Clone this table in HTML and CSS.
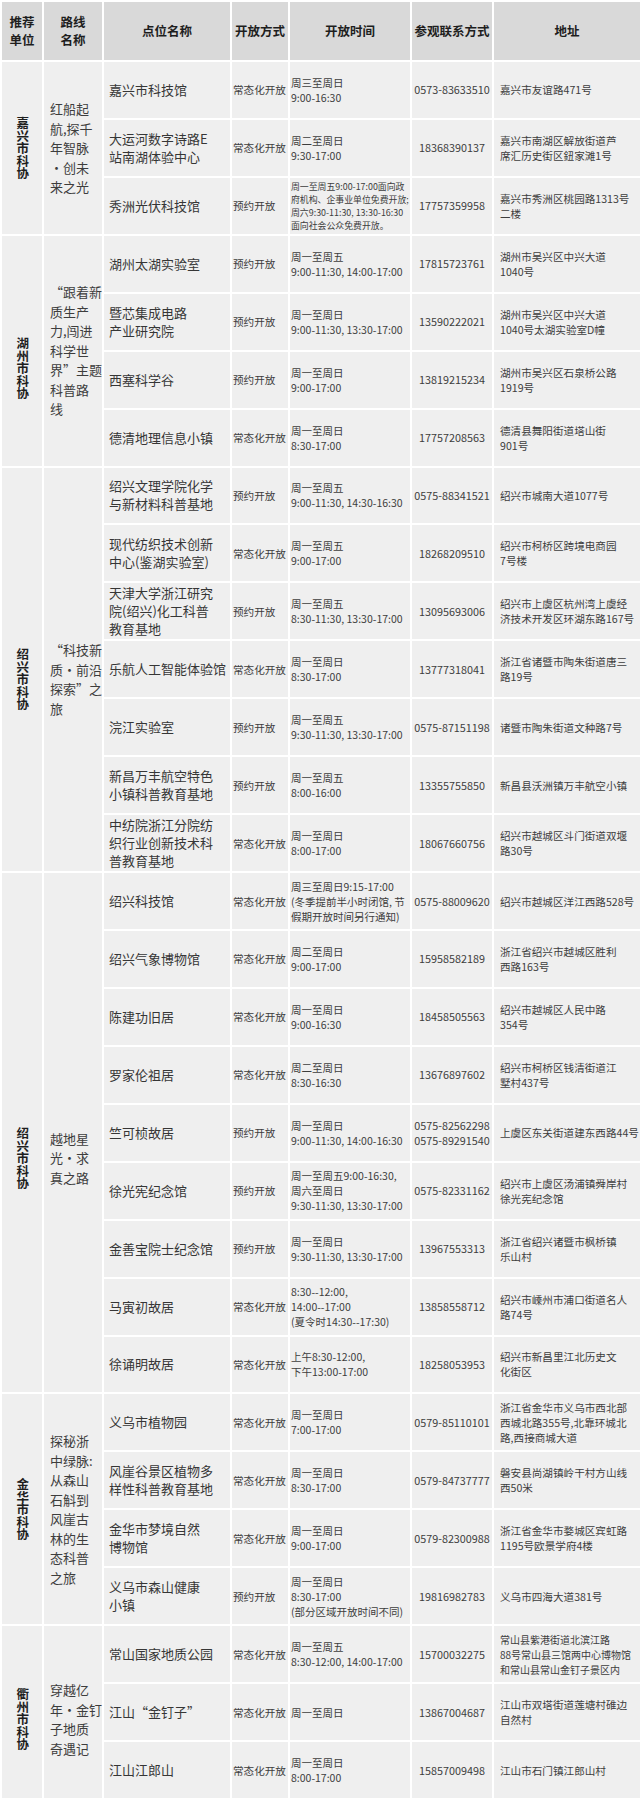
FILE: index.html
```html
<!DOCTYPE html>
<html lang="zh-CN">
<head>
<meta charset="utf-8">
<title>科普路线点位</title>
<link rel="stylesheet" href="styles.css">
</head>
<body>
<div class="t">
  <div class="h">推荐<br>单位</div>
  <div class="h">路线<br>名称</div>
  <div class="h">点位名称</div>
  <div class="h">开放方式</div>
  <div class="h">开放时间</div>
  <div class="h">参观联系方式</div>
  <div class="h">地址</div>

  <div class="c unit r3"><span class="v">嘉兴市科协</span></div>
  <div class="c route r3">红船起<br>航,探千<br>年智脉<br>·创未<br>来之光</div>
  <div class="c name">嘉兴市科技馆</div>
  <div class="c mode">常态化开放</div>
  <div class="c time">周三至周日<br>9:00-16:30</div>
  <div class="c tel">0573-83633510</div>
  <div class="c addr">嘉兴市友谊路471号</div>

  <div class="c name">大运河数字诗路E<br>站南湖体验中心</div>
  <div class="c mode">常态化开放</div>
  <div class="c time">周二至周日<br>9:30-17:00</div>
  <div class="c tel">18368390137</div>
  <div class="c addr">嘉兴市南湖区解放街道芦<br>席汇历史街区鈕家滩1号</div>

  <div class="c name">秀洲光伏科技馆</div>
  <div class="c mode">预约开放</div>
  <div class="c time small">周一至周五9:00-17:00面向政<br>府机构、企事业单位免费开放;<br>周六9:30-11:30, 13:30-16:30<br>面向社会公众免费开放。</div>
  <div class="c tel">17757359958</div>
  <div class="c addr">嘉兴市秀洲区桃园路1313号<br>二楼</div>

  <div class="c unit r4 off-hz"><span class="v">湖州市科协</span></div>
  <div class="c route r4">“跟着新<br>质生产<br>力,闯进<br>科学世<br>界”主题<br>科普路<br>线</div>
  <div class="c name">湖州太湖实验室</div>
  <div class="c mode">预约开放</div>
  <div class="c time">周一至周五<br>9:00-11:30, 14:00-17:00</div>
  <div class="c tel">17815723761</div>
  <div class="c addr">湖州市吴兴区中兴大道<br>1040号</div>

  <div class="c name">暨芯集成电路<br>产业研究院</div>
  <div class="c mode">预约开放</div>
  <div class="c time">周一至周日<br>9:00-11:30, 13:30-17:00</div>
  <div class="c tel">13590222021</div>
  <div class="c addr">湖州市吴兴区中兴大道<br>1040号太湖实验室D幢</div>

  <div class="c name">西塞科学谷</div>
  <div class="c mode">预约开放</div>
  <div class="c time">周一至周日<br>9:00-17:00</div>
  <div class="c tel">13819215234</div>
  <div class="c addr">湖州市吴兴区石泉桥公路<br>1919号</div>

  <div class="c name">德清地理信息小镇</div>
  <div class="c mode">常态化开放</div>
  <div class="c time">周一至周日<br>8:30-17:00</div>
  <div class="c tel">17757208563</div>
  <div class="c addr">德清县舞阳街道塔山街<br>901号</div>

  <div class="c unit r7 off-sx1"><span class="v">绍兴市科协</span></div>
  <div class="c route r7 off-sx1">“科技新<br>质·前沿<br>探索”之<br>旅</div>
  <div class="c name">绍兴文理学院化学<br>与新材料科普基地</div>
  <div class="c mode">预约开放</div>
  <div class="c time">周一至周五<br>9:00-11:30, 14:30-16:30</div>
  <div class="c tel">0575-88341521</div>
  <div class="c addr">绍兴市城南大道1077号</div>

  <div class="c name">现代纺织技术创新<br>中心(鉴湖实验室)</div>
  <div class="c mode">常态化开放</div>
  <div class="c time">周一至周五<br>9:00-17:00</div>
  <div class="c tel">18268209510</div>
  <div class="c addr">绍兴市柯桥区跨境电商园<br>7号楼</div>

  <div class="c name">天津大学浙江研究<br>院(绍兴)化工科普<br>教育基地</div>
  <div class="c mode">预约开放</div>
  <div class="c time">周一至周五<br>8:30-11:30, 13:30-17:00</div>
  <div class="c tel">13095693006</div>
  <div class="c addr">绍兴市上虞区杭州湾上虞经<br>济技术开发区环湖东路167号</div>

  <div class="c name">乐航人工智能体验馆</div>
  <div class="c mode">常态化开放</div>
  <div class="c time">周一至周日<br>8:30-17:00</div>
  <div class="c tel">13777318041</div>
  <div class="c addr">浙江省诸暨市陶朱街道唐三<br>路19号</div>

  <div class="c name">浣江实验室</div>
  <div class="c mode">预约开放</div>
  <div class="c time">周一至周五<br>9:30-11:30, 13:30-17:00</div>
  <div class="c tel">0575-87151198</div>
  <div class="c addr">诸暨市陶朱街道文种路7号</div>

  <div class="c name">新昌万丰航空特色<br>小镇科普教育基地</div>
  <div class="c mode">预约开放</div>
  <div class="c time">周一至周五<br>8:00-16:00</div>
  <div class="c tel">13355755850</div>
  <div class="c addr">新昌县沃洲镇万丰航空小镇</div>

  <div class="c name">中纺院浙江分院纺<br>织行业创新技术科<br>普教育基地</div>
  <div class="c mode">常态化开放</div>
  <div class="c time">周一至周日<br>8:00-17:00</div>
  <div class="c tel">18067660756</div>
  <div class="c addr">绍兴市越城区斗门街道双堰<br>路30号</div>

  <div class="c unit r9 off-sx2"><span class="v">绍兴市科协</span></div>
  <div class="c route r9 off-sx2">越地星<br>光·求<br>真之路</div>
  <div class="c name">绍兴科技馆</div>
  <div class="c mode">常态化开放</div>
  <div class="c time">周三至周日9:15-17:00<br>(冬季提前半小时闭馆, 节<br>假期开放时间另行通知)</div>
  <div class="c tel">0575-88009620</div>
  <div class="c addr">绍兴市越城区洋江西路528号</div>

  <div class="c name">绍兴气象博物馆</div>
  <div class="c mode">常态化开放</div>
  <div class="c time">周二至周日<br>9:00-17:00</div>
  <div class="c tel">15958582189</div>
  <div class="c addr">浙江省绍兴市越城区胜利<br>西路163号</div>

  <div class="c name">陈建功旧居</div>
  <div class="c mode">常态化开放</div>
  <div class="c time">周一至周日<br>9:00-16:30</div>
  <div class="c tel">18458505563</div>
  <div class="c addr">绍兴市越城区人民中路<br>354号</div>

  <div class="c name">罗家伦祖居</div>
  <div class="c mode">常态化开放</div>
  <div class="c time">周二至周日<br>8:30-16:30</div>
  <div class="c tel">13676897602</div>
  <div class="c addr">绍兴市柯桥区钱清街道江<br>墅村437号</div>

  <div class="c name">竺可桢故居</div>
  <div class="c mode">预约开放</div>
  <div class="c time">周一至周日<br>9:00-11:30, 14:00-16:30</div>
  <div class="c tel">0575-82562298<br>0575-89291540</div>
  <div class="c addr">上虞区东关街道建东西路44号</div>

  <div class="c name">徐光宪纪念馆</div>
  <div class="c mode">预约开放</div>
  <div class="c time">周一至周五9:00-16:30,<br>周六至周日<br>9:30-11:30, 13:30-17:00</div>
  <div class="c tel">0575-82331162</div>
  <div class="c addr">绍兴市上虞区汤浦镇舜岸村<br>徐光宪纪念馆</div>

  <div class="c name">金善宝院士纪念馆</div>
  <div class="c mode">预约开放</div>
  <div class="c time">周一至周日<br>9:30-11:30, 13:30-17:00</div>
  <div class="c tel">13967553313</div>
  <div class="c addr">浙江省绍兴诸暨市枫桥镇<br>乐山村</div>

  <div class="c name">马寅初故居</div>
  <div class="c mode">常态化开放</div>
  <div class="c time">8:30--12:00,<br>14:00--17:00<br>(夏令时14:30--17:30)</div>
  <div class="c tel">13858558712</div>
  <div class="c addr">绍兴市嵊州市浦口街道名人<br>路74号</div>

  <div class="c name">徐诵明故居</div>
  <div class="c mode">常态化开放</div>
  <div class="c time">上午8:30-12:00,<br>下午13:00-17:00</div>
  <div class="c tel">18258053953</div>
  <div class="c addr">绍兴市新昌里江北历史文<br>化街区</div>

  <div class="c unit r4"><span class="v">金华市科协</span></div>
  <div class="c route r4">探秘浙<br>中绿脉:<br>从森山<br>石斛到<br>风崖古<br>林的生<br>态科普<br>之旅</div>
  <div class="c name">义乌市植物园</div>
  <div class="c mode">常态化开放</div>
  <div class="c time">周一至周日<br>7:00-17:00</div>
  <div class="c tel">0579-85110101</div>
  <div class="c addr">浙江省金华市义乌市西北部<br>西城北路355号,北靠环城北<br>路,西接商城大道</div>

  <div class="c name">风崖谷景区植物多<br>样性科普教育基地</div>
  <div class="c mode">常态化开放</div>
  <div class="c time">周一至周日<br>8:30-17:00</div>
  <div class="c tel">0579-84737777</div>
  <div class="c addr">磐安县尚湖镇岭干村方山线<br>西50米</div>

  <div class="c name">金华市梦境自然<br>博物馆</div>
  <div class="c mode">常态化开放</div>
  <div class="c time">周一至周日<br>9:00-17:00</div>
  <div class="c tel">0579-82300988</div>
  <div class="c addr">浙江省金华市婺城区宾虹路<br>1195号欧景学府4楼</div>

  <div class="c name">义乌市森山健康<br>小镇</div>
  <div class="c mode">预约开放</div>
  <div class="c time">周一至周日<br>8:30-17:00<br>(部分区域开放时间不同)</div>
  <div class="c tel">19816982783</div>
  <div class="c addr">义乌市四海大道381号</div>

  <div class="c unit r3 off-qz"><span class="v">衢州市科协</span></div>
  <div class="c route r3 off-qz">穿越亿<br>年·金钉<br>子地质<br>奇遇记</div>
  <div class="c name">常山国家地质公园</div>
  <div class="c mode">常态化开放</div>
  <div class="c time">周一至周五<br>8:30-12:00, 14:00-17:00</div>
  <div class="c tel">15700032275</div>
  <div class="c addr tight">常山县紫港街道北滨江路<br>88号常山县三馆两中心博物馆<br>和常山县常山金钉子景区内</div>

  <div class="c name">江山“金钉子”</div>
  <div class="c mode">常态化开放</div>
  <div class="c time">周一至周日</div>
  <div class="c tel">13867004687</div>
  <div class="c addr">江山市双塔街道莲塘村碓边<br>自然村</div>

  <div class="c name">江山江郎山</div>
  <div class="c mode">常态化开放</div>
  <div class="c time">周一至周日<br>8:00-17:00</div>
  <div class="c tel">15857009498</div>
  <div class="c addr">江山市石门镇江郎山村</div>
</div>
</body>
</html>
```

FILE: styles.css
```css
html, body {
  margin: 0;
  padding: 0;
  background: #ffffff;
}

body {
  font-family: "Noto Sans CJK SC", "Noto Sans", sans-serif;
  color: #3d3d3d;
}

.t {
  box-sizing: border-box;
  width: 640px;
  height: 1800px;
  padding: 2px 0 2px 2px;
  display: grid;
  grid-template-columns: 40px 58px 126px 56px 120px 80px 146px;
  grid-template-rows: 58px repeat(30, minmax(0, 1fr));
  gap: 2px;
  background: #ffffff;
}

.h {
  background: #d9d9d9;
  display: flex;
  align-items: center;
  justify-content: center;
  text-align: center;
  font-weight: 700;
  font-size: 12.5px;
  line-height: 18px;
  color: #1e1e1e;
  white-space: nowrap;
}

.c {
  background: #efefef;
  display: flex;
  align-items: center;
  box-sizing: border-box;
  overflow: visible;
}

.r3 { grid-row: span 3; }
.r4 { grid-row: span 4; }
.r7 { grid-row: span 7; }
.r9 { grid-row: span 9; }

.unit {
  justify-content: center;
  font-weight: 700;
  font-size: 12.5px;
  color: #1e1e1e;
}

.v {
  writing-mode: vertical-rl;
  text-orientation: upright;
  line-height: 1;
}

.off-hz.unit { padding-top: 36px; }
.off-sx1 { padding-top: 20px; }
.off-sx2 { padding-top: 50px; }
.off-qz { padding-top: 14px; }

.route {
  padding-left: 6px;
  font-size: 13px;
  line-height: 19.5px;
  white-space: nowrap;
  color: #3d3d3d;
}

.name {
  padding-left: 5px;
  font-size: 13px;
  line-height: 18px;
  white-space: nowrap;
  color: #363636;
}

.mode {
  padding-left: 1px;
  font-size: 10.6px;
  white-space: nowrap;
}

.time {
  padding-left: 1px;
  font-size: 10.5px;
  line-height: 15px;
  white-space: nowrap;
}

.time.small {
  font-size: 8.9px;
  line-height: 13px;
}

.tel {
  justify-content: center;
  text-align: center;
  font-size: 10.8px;
  line-height: 15px;
  white-space: nowrap;
}

.addr {
  padding-left: 6px;
  font-size: 10.6px;
  line-height: 15px;
  white-space: nowrap;
}

.addr.tight {
  font-size: 10px;
}
```
